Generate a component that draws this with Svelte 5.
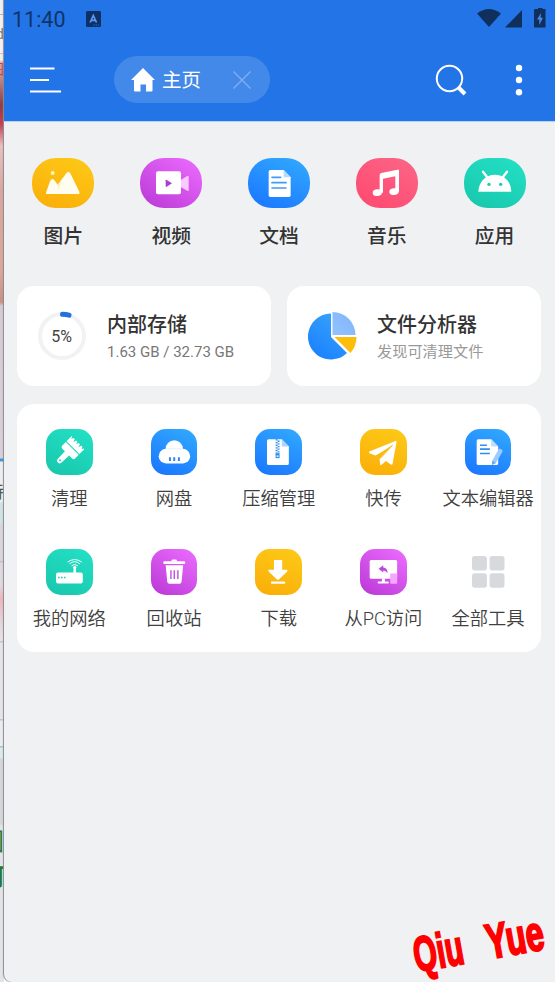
<script>
  const categories = [
    { label: '图片', icon: 'picture', tone: 'yellow' },
    { label: '视频', icon: 'video', tone: 'purple' },
    { label: '文档', icon: 'doc', tone: 'blue' },
    { label: '音乐', icon: 'music', tone: 'pink' },
    { label: '应用', icon: 'android', tone: 'green' }
  ];
  const tools = [
    { label: '清理', icon: 'brush', tone: 'green' },
    { label: '网盘', icon: 'cloud', tone: 'blue' },
    { label: '压缩管理', icon: 'zip', tone: 'blue' },
    { label: '快传', icon: 'plane', tone: 'yellow' },
    { label: '文本编辑器', icon: 'editor', tone: 'blue' },
    { label: '我的网络', icon: 'router', tone: 'green' },
    { label: '回收站', icon: 'trash', tone: 'purple' },
    { label: '下载', icon: 'download', tone: 'yellow' },
    { label: '从PC访问', icon: 'pc', tone: 'purple' },
    { label: '全部工具', icon: 'grid', tone: 'none' }
  ];
</script>

{#snippet glyph(name)}
  {#if name === 'picture'}
    <circle cx="62" cy="45" r="6" fill="#fff3c4" />
    <path d="M46 108Q40 108 43 101L54 70Q61 56 69 69L77 80L103 46Q109 38 115 46L142 101Q144 108 138 108Z" fill="#fffdf0" />
    <path d="M77 80L90 63L80 98Z" fill="#ffe9a0" opacity=".6" />
  {:else if name === 'video'}
    <path d="M122 66L142 54Q146 52 146 57V96Q146 101 142 98L122 87Z" fill="#fac9ff" />
    <rect x="48" y="40" width="75" height="69" rx="6" fill="#fff" />
    <path d="M79 65L96 76L79 87Q77 87 77 85V67Q77 65 79 65Z" fill="#b03bd2" />
  {:else if name === 'doc'}
    <path d="M67 36H107L128 58V112Q128 117 123 117H67Q62 117 62 112V41Q62 36 67 36Z" fill="#fff" />
    <path d="M107 36L128 58H111Q107 58 107 54Z" fill="#b5dcff" />
    <path d="M72 58H98M72 74H114M72 90H114" stroke="#3d9cf5" stroke-width="5" stroke-linecap="round" />
  {:else if name === 'music'}
    <ellipse cx="64" cy="104" rx="14" ry="10" transform="rotate(-8 64 104)" fill="#fff" />
    <ellipse cx="114" cy="101" rx="14" ry="10" transform="rotate(-8 114 101)" fill="#fff" />
    <path d="M71 104V51Q71 46 76 45L124 35Q129 34 129 39V101H118V55L81 62V104Z" fill="#fff" />
  {:else if name === 'android'}
    <path d="M43 101C44 71 65 50 93 50S141 71 142 101Z" fill="#fff" />
    <path d="M57 41L71 59M129 41L115 59" stroke="#fff" stroke-width="7" stroke-linecap="round" />
    <circle cx="75" cy="79" r="5" fill="#18cfb3" /><circle cx="110" cy="79" r="5" fill="#18cfb3" />
  {:else if name === 'brush'}
    <g transform="translate(76 61) rotate(45)" fill="#fff">
      <path d="M-27 -27Q-27 -30 -24 -28L-22 -22L-19 -29H-14L-11 -20L-8 -29H-3L0 -22L3 -29H8L11 -20L14 -29H19L22 -22L25 -28Q28 -30 28 -26V-7H-27Z" />
      <path d="M-27 -4H28V12Q28 18 21 18H9L8 48Q8 57 0 57T-8 48L-9 18H-20Q-27 18 -27 12Z" />
      <circle cx="0" cy="48" r="3" fill="#20d2b6" />
    </g>
  {:else if name === 'cloud'}
    <circle cx="70" cy="60" r="26" fill="#fff" />
    <rect x="23" y="60" width="95" height="44" rx="22" fill="#fff" />
    <path d="M44 60H96" stroke="#d4e8ff" stroke-width="2" />
    <path d="M57 85V97M70 85V97M84 85V97" stroke="#2c84f5" stroke-width="6" />
  {:else if name === 'zip'}
    <path d="M41 31H81L102 53V104Q102 109 97 109H41Q36 109 36 104V36Q36 31 41 31Z" fill="#fff" />
    <path d="M81 31L102 53H85Q81 53 81 49Z" fill="#a9d5ff" />
    <path d="M65 31V74" stroke="#318df2" stroke-width="6" stroke-dasharray="4 4" />
    <path d="M71 35V74" stroke="#318df2" stroke-width="6" stroke-dasharray="4 4" />
    <rect x="62" y="73" width="12" height="15" fill="#318df2" /><rect x="65" y="80" width="6" height="4" fill="#fff" />
  {:else if name === 'plane'}
    <path d="M28 68L107 36Q111 35 110 40L98 106Q97 110 93 107L78 97L64 109Q60 110 60 105L59 90L95 53L47 80L28 73Q25 70 28 68Z" fill="#fff" />
    <path d="M50 82L98 49L60 90" fill="none" stroke="#fdb909" stroke-width="2.500" />
  {:else if name === 'editor'}
    <path d="M40 31H79L100 53V104Q100 109 95 109H40Q35 109 35 104V36Q35 31 40 31Z" fill="#fff" />
    <path d="M79 31L100 53H83Q79 53 79 49Z" fill="#b9dcff" />
    <path d="M45 49H66M45 61H75M45 74H75" stroke="#2f8ff3" stroke-width="5" />
    <path d="M101 62Q103 58 107 60L112 64Q115 66 112 70L93 103L82 108L82 96Z" fill="#9dcbff" />
    <path d="M82 96L93 103L81 109Z" fill="#62a8f9" />
  {:else if name === 'router'}
    <rect x="30" y="71" width="81" height="33" rx="6" fill="#fff" />
    <path d="M82 72L84 55H89L91 72Z" fill="#fff" />
    <circle cx="86.500" cy="56" r="5" fill="#fff" />
    <path d="M78 50Q86 43 95 50M72 44Q86 32 101 44M66 39Q86 24 107 39" fill="none" stroke="#fff" stroke-width="3" stroke-linecap="round" />
    <path d="M36 86H41M45 86H50M54 86H59" stroke="#1ccfb3" stroke-width="5" />
  {:else if name === 'trash'}
    <rect x="37" y="37" width="66" height="8" rx="3" fill="#fff" />
    <path d="M62 38V35Q62 32 65 32H75Q78 32 78 35V38Z" fill="#fff" />
    <path d="M44 49H97L92 100Q91 105 86 105H55Q50 105 49 100Z" fill="#fff" />
    <path d="M60 64V91M70 64V91M81 64V91" stroke="#bf43df" stroke-width="4" />
  {:else if name === 'download'}
    <path d="M57 33H82V63H96Q100 64 97 68L72 92Q69 94 66 92L41 68Q38 64 42 63H57Z" fill="#fff" />
    <rect x="48" y="98" width="43" height="7" rx="2" fill="#fff" />
  {:else if name === 'pc'}
    <rect x="29" y="33" width="83" height="57" rx="5" fill="#fff" />
    <path d="M66 89H75V98H84Q87 98 87 101T84 104H56Q53 104 53 101T56 98H66Z" fill="#fff" />
    <rect x="91" y="74" width="21" height="31" rx="2" fill="#f4a8fd" />
    <path d="M56 60L70 49V56Q83 57 83 73Q78 65 70 65V71Z" fill="#bd48dd" />
  {:else}
    <g fill="#d7d9dc">
      <rect x="21" y="21" width="45" height="44" rx="8" /><rect x="74" y="21" width="45" height="44" rx="8" />
      <rect x="21" y="73" width="45" height="44" rx="8" /><rect x="74" y="73" width="45" height="44" rx="8" />
    </g>
  {/if}
{/snippet}

<div class="screen">
  <aside class="edge">
    <span class="frag f1">d</span>
    <span class="frag f2">图</span>
    <span class="frag f3">持</span>
    <span class="frag f4">图</span>
    <span class="frag f5">何</span>
  </aside>
  <div class="app">
    <header>
      <div class="status">
        <span class="time">11:40</span>
        <svg class="lang" width="15" height="16" viewBox="0 0 15 16">
          <rect width="15" height="16" rx="1.500" fill="#0d3166" />
          <path d="M4.200 11.500L7.300 4.500L10.500 11.500M5.200 9.300H9.500" fill="none" stroke="#5b9af0" stroke-width="1.700" />
          <path d="M7.500 14H13" stroke="#2574e7" stroke-width="1" stroke-dasharray="1.200 1" />
        </svg>
        <span class="grow"></span>
        <svg width="69" height="22" viewBox="0 0 69 22" fill="#112f5d">
          <path d="M0 5.500Q12 -3.500 24 5.500L12 19Z" />
          <path d="M45 2V19.500H28Z" />
          <path d="M58.500 1H61V0H65.500V1H68.500V19.500H57V2Q57 1 58.500 1Z" />
          <path d="M64 5L60 11.500H62.300V17L66 9.800H63.600Z" fill="#4689e8" />
        </svg>
      </div>
      <div class="toolbar">
        <svg class="menu" width="32" height="28" viewBox="0 0 32 28"><path d="M0 2.500H24.500M0 14H19M0 25.500H31" stroke="#fff" stroke-width="2" /></svg>
        <div class="tab">
          <svg width="24" height="24" viewBox="0 0 24 24"><path d="M12 0L24 12H21.500V22.500Q21.500 23.500 20.500 23.500H15V16.500H9.500V23.500H4Q3 23.500 3 22.500V12H0Z" fill="#fff" /></svg>
          <span>主页</span>
          <svg class="close" width="18" height="18" viewBox="0 0 18 18"><path d="M.5 .5L17.500 17.500M17.500 .5L.5 17.500" stroke="#80b0f2" stroke-width="1.300" /></svg>
        </div>
        <span class="grow"></span>
        <svg class="search" width="32" height="32" viewBox="0 0 32 32" fill="none" stroke="#fff"><circle cx="14.500" cy="14.500" r="12.700" stroke-width="2" /><path d="M23 23L30 30" stroke-width="4" /></svg>
        <svg width="8" height="32" viewBox="0 0 8 32" fill="#fff"><circle cx="4" cy="4" r="3.200" /><circle cx="4" cy="16" r="3.200" /><circle cx="4" cy="28.300" r="3.200" /></svg>
      </div>
    </header>

    <nav class="categories">
      {#each categories as c}
        <div class="category">
          <svg class="pill {c.tone}" viewBox="0 0 186 150">{@render glyph(c.icon)}</svg>
          <span>{c.label}</span>
        </div>
      {/each}
    </nav>

    <section class="cards">
      <div class="card">
        <svg width="50" height="50" viewBox="0 0 50 50" class="ring">
          <circle cx="25" cy="25" r="22" fill="none" stroke="#f0f2f4" stroke-width="4" />
          <path d="M25.500 3.200Q29 3.300 32 4.200" fill="none" stroke="#2470dc" stroke-width="5" stroke-linecap="round" />
          <text x="24.500" y="31" text-anchor="middle">5%</text>
        </svg>
        <div class="info"><strong>内部存储</strong><small>1.63 GB / 32.73 GB</small></div>
      </div>
      <div class="card">
        <svg width="50" height="50" viewBox="0 0 50 50" class="chart">
          <defs>
            <linearGradient id="pie" x1="0" y1="1" x2=".6" y2="0"><stop stop-color="#167dff" /><stop offset="1" stop-color="#36a0fb" /></linearGradient>
            <linearGradient id="slice" x1="0" y1="1" x2="1" y2="0"><stop stop-color="#93c3fe" /><stop offset="1" stop-color="#7fb3fb" /></linearGradient>
          </defs>
          <path d="M24 2.500A23 23 0 1 0 40 42L24 26Z" fill="url(#pie)" />
          <path d="M25.500 1A23 23 0 0 1 48.500 24H25.500Z" fill="url(#slice)" />
          <path d="M27.500 26H49.500Q49.500 35 43.500 42Z" fill="#fdbd0b" />
        </svg>
        <div class="info"><strong>文件分析器</strong><small class="hint">发现可清理文件</small></div>
      </div>
    </section>

    <section class="tools">
      {#each tools as t}
        <div class="tool">
          <svg class="tile {t.tone}" viewBox="0 0 140 139">{@render glyph(t.icon)}</svg>
          <span>{t.label}</span>
        </div>
      {/each}
    </section>

    <svg class="mark" width="155" height="82" viewBox="0 0 155 82">
      <text transform="translate(16.500 72) rotate(-10)" textLength="50" lengthAdjust="spacingAndGlyphs">Qiu</text>
      <text transform="translate(89 59) rotate(-10)" textLength="58" lengthAdjust="spacingAndGlyphs">Yue</text>
    </svg>
  </div>
</div>

<style>
  .screen {
    position: relative;
    width: 555px;
    height: 982px;
    display: flex;
    overflow: hidden;
    font-family: Roboto, 'Noto Sans CJK SC', sans-serif;
    color: #333;
  }
  .edge {
    position: relative;
    flex: none;
    width: 4px;
    overflow: hidden;
    background: linear-gradient(#eef0f2 0 14px, #b6b6b8 14px 15px, #f1f1f3 15px 53px, #c5c5c7 53px 54px, #eee 54px 60px, #ddb4b4 62px, #8e3d43 105px, #c83d50 124px, #e9c1c1 146px, #d9a79e 190px, #dca69a 270px, #c98f82 302px, #d5cbd2 306px, #d8d0d8 458px, #3d98df 459px 461px, #eceef0 462px 502px, #cfe3e3 503px 524px, #d9d5da 525px 561px, #c3c0c5 561px 562px, #dfd9df 563px 585px, #f0b4be 598px, #e6d2d8 620px, #e6e2e6 641px, #c7c3c8 641px 642px, #e7e4e8 643px 719px, #c4c6c8 719px 720px, #e9ecee 721px 746px, #a9c1c9 746px 747px, #dce9eb 748px 758px, #d5d6d8 759px 824px, #e2e4e6 826px);
  }
  .frag {
    position: absolute;
    right: 0;
    font-size: 18px;
    line-height: 24px;
    color: #777;
  }
  .f1 { top: 22px; font-size: 15px; }
  .f2 { top: 57px; color: #d13b45; font-size: 14px; }
  .f3 { top: 480px; color: #554; }
  .f4 { top: 830px; color: #237b35; font-size: 24px; }
  .f5 { top: 865px; color: #237b25; font-size: 24px; font-weight: 700; }
  .app {
    flex: 1;
    min-width: 0;
    background: #eff1f3;
    border-bottom-left-radius: 8px;
    box-shadow: -1px 0 1px #8b8b91;
    z-index: 1;
  }
  header {
    height: 121px;
    background: #2374e7;
    border-bottom: 1px solid #b5d3f6;
    box-sizing: content-box;
  }
  .status {
    height: 38px;
    box-sizing: border-box;
    padding: 0 9px 0 8px;
    display: flex;
    align-items: center;
  }
  .time {
    font-size: 21.500px;
    color: #103468;
    width: 74px;
    padding-top: 1px;
  }
  .grow { flex: 1; }
  .toolbar {
    height: 83px;
    display: flex;
    align-items: center;
    padding: 0 32px 0 26px;
  }
  .menu { margin-right: 51.500px; }
  .tab {
    width: 156px;
    height: 47px;
    border-radius: 24px;
    box-sizing: border-box;
    background: #4389e9;
    display: flex;
    align-items: center;
    padding: 0 18.500px 0 17.500px;
    color: #fff;
    font-size: 19.500px;
  }
  .tab span { margin-left: 7px; line-height: 28px; padding-top: 2px; }
  .close { margin-left: auto; }
  .search { margin-right: 48px; }
  .categories {
    display: grid;
    grid-template-columns: repeat(5, 1fr);
    padding: 36px 6.500px 0 5.500px;
    height: 128px;
  }
  .category, .tool {
    display: flex;
    flex-direction: column;
    align-items: center;
    white-space: nowrap;
  }
  .category span {
    font-size: 19.800px;
    line-height: 30px;
    font-weight: 500;
    margin-top: 14px;
  }
  .pill {
    width: 62px;
    height: 50px;
    border-radius: 24px;
  }
  .tile {
    width: 46.500px;
    height: 46px;
    border-radius: 15px;
  }
  .yellow { background: linear-gradient(20deg, #faad08, #fdca18); }
  .purple { background: linear-gradient(35deg, #b937d5, #ed6dff); }
  .blue { background: linear-gradient(25deg, #1974ff, #32abff); }
  .pink { background: linear-gradient(30deg, #ff476e, #fb6788); }
  .green { background: linear-gradient(25deg, #18c6ab, #23e1c6); }
  .cards {
    display: grid;
    grid-template-columns: 254px 254px;
    gap: 16px;
    padding-left: 13px;
  }
  .card {
    height: 100px;
    background: #fff;
    border-radius: 17px;
    display: flex;
    align-items: center;
    padding-left: 20px;
    box-sizing: border-box;
  }
  .ring text { font-size: 16px; fill: #444; }
  .info {
    margin-left: 20px;
    padding-top: 2px;
    display: flex;
    flex-direction: column;
    white-space: nowrap;
  }
  .info strong {
    font-size: 20px;
    font-weight: 500;
    line-height: 30px;
  }
  .info small {
    font-size: 15px;
    line-height: 24px;
    color: #777;
  }
  .info .hint { color: #999; font-size: 15.200px; }
  .tools {
    margin: 18px 0 0 13px;
    width: 524px;
    height: 248px;
    box-sizing: border-box;
    padding-top: 25px;
    background: #fff;
    border-radius: 17px;
    display: grid;
    grid-template-columns: repeat(5, 104.700px);
    grid-auto-rows: 120px;
  }
  .tool span {
    font-size: 18.300px;
    line-height: 28px;
    margin-top: 10px;
    color: #404040;
    font-weight: 350;
  }
  .mark {
    position: absolute;
    right: 0;
    bottom: 0;
  }
  .mark text {
    font-family: 'Liberation Sans Narrow', 'Liberation Sans', sans-serif;
    font-size: 49px;
    font-weight: 700;
    fill: #f00;
    stroke: #f00;
    stroke-width: 2.200px;
  }
</style>
